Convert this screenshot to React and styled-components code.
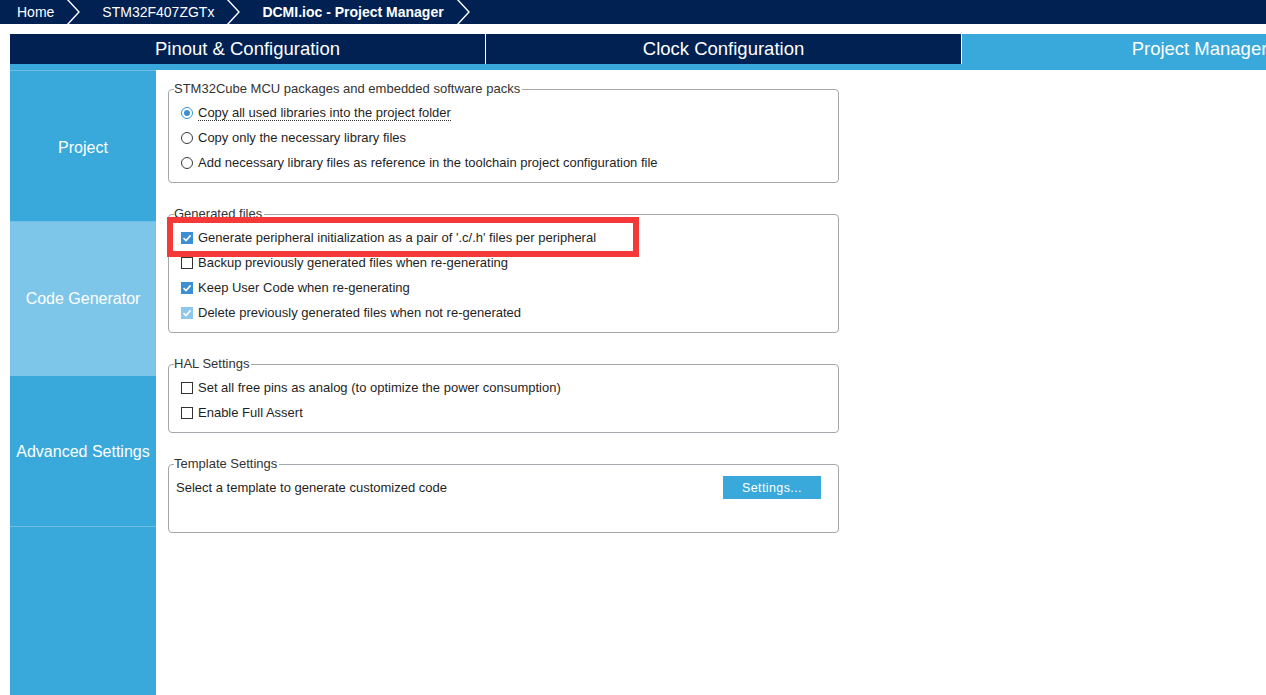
import React from 'react';
import styled, { createGlobalStyle } from 'styled-components';

const GlobalStyle = createGlobalStyle`
  html, body {
    margin: 0;
    padding: 0;
    background: #ffffff;
    overflow: hidden;
  }
  body {
    font-family: "Liberation Sans", Arial, sans-serif;
  }
`;

const NAVY = '#012152';
const BLUE = '#39a9dc';

const Page = styled.div`
  display: flex;
  flex-direction: column;
  height: 100vh;
  width: 100vw;
  overflow: hidden;
`;

const Breadcrumb = styled.div`
  display: flex;
  align-items: center;
  height: 24px;
  background: ${NAVY};
  color: #ffffff;
  font-size: 14px;
  padding-left: 17px;
  flex-shrink: 0;
`;

const Crumb = styled.span`
  font-weight: ${(p) => (p.$bold ? 700 : 400)};
  white-space: nowrap;
`;

const Chevron = styled.svg`
  width: 18px;
  height: 24px;
  margin: 0 20px 0 10px;
  flex-shrink: 0;
`;

const TabBar = styled.div`
  display: flex;
  margin-top: 10px;
  margin-left: 10px;
  height: 30px;
  flex-shrink: 0;
`;

const Tab = styled.div`
  width: 475px;
  flex-shrink: 0;
  display: flex;
  align-items: center;
  justify-content: center;
  background: ${(p) => (p.$active ? BLUE : NAVY)};
  border-right: 1px solid #ffffff;
  color: #ffffff;
  font-size: 18.5px;
  white-space: nowrap;
`;

const TabStrip = styled.div`
  height: 6px;
  margin-left: 10px;
  background: ${BLUE};
  flex-shrink: 0;
`;

const Body = styled.div`
  display: flex;
  flex: 1;
  margin-left: 10px;
  min-height: 0;
`;

const Sidebar = styled.div`
  width: 146px;
  background: ${BLUE};
  display: flex;
  flex-direction: column;
  flex-shrink: 0;
`;

const NavItem = styled.div`
  height: ${(p) => p.$h}px;
  display: flex;
  align-items: center;
  justify-content: center;
  color: #ffffff;
  font-size: 16px;
  padding-top: ${(p) => p.$shift || 0}px;
  background: ${(p) => (p.$active ? '#7dc6e9' : BLUE)};
  border-top: ${(p) => (p.$line ? '1px solid #72bfe6' : 'none')};
  border-bottom: ${(p) => (p.$lineBottom ? '1px solid #72bfe6' : 'none')};
  box-sizing: border-box;
`;

const Content = styled.div`
  display: flex;
  flex-direction: column;
  gap: 24px;
  padding: 12px 0 0 12px;
  width: 671px;
`;

const Group = styled.div`
  position: relative;
`;

const Box = styled.fieldset`
  margin: 0;
  border: 1px solid #a3a7ab;
  border-radius: 4px;
  padding: 4px 12px 7px 12px;
  min-height: ${(p) => p.$minH || 0}px;
  box-sizing: border-box;
  display: flex;
  flex-direction: column;
`;

const Legend = styled.legend`
  font-size: 13px;
  line-height: 14px;
  color: #333333;
  padding: 0 2px 0 0;
  margin-left: -7px;
`;

const Row = styled.div`
  display: flex;
  align-items: center;
  height: 25px;
  font-size: 13px;
  color: #1f1f1f;
  gap: 5px;
`;

const Label = styled.span`
  white-space: nowrap;
  border-bottom: ${(p) => (p.$focus ? '1px dotted #333333' : '1px solid transparent')};
  line-height: 15px;
`;

const RadioDot = styled.span`
  width: 12px;
  height: 12px;
  border-radius: 50%;
  box-sizing: border-box;
  border: 1px solid ${(p) => (p.$on ? '#3b8fd4' : '#3a3a3a')};
  display: flex;
  align-items: center;
  justify-content: center;
  flex-shrink: 0;
  &::after {
    content: '';
    width: 6px;
    height: 6px;
    border-radius: 50%;
    background: ${(p) => (p.$on ? '#3b8fd4' : 'transparent')};
  }
`;

const Check = styled.span`
  width: 12px;
  height: 12px;
  box-sizing: border-box;
  flex-shrink: 0;
  display: flex;
  align-items: center;
  justify-content: center;
  background: ${(p) => (p.$dim ? '#8ec6ee' : p.$on ? '#3b8fd4' : '#ffffff')};
  border: 1px solid ${(p) => (p.$dim ? '#8ec6ee' : p.$on ? '#3b8fd4' : '#333333')};
`;

const TemplateRow = styled.div`
  display: flex;
  align-items: center;
  justify-content: space-between;
  height: 25px;
  margin-left: -5px;
  padding-right: 5px;
  font-size: 13px;
  color: #1f1f1f;
`;

const SettingsButton = styled.div`
  width: 98px;
  height: 23px;
  background: ${BLUE};
  color: #ffffff;
  font-size: 12.5px;
  letter-spacing: 0.4px;
  display: flex;
  align-items: center;
  justify-content: center;
`;

const Highlight = styled.div`
  position: absolute;
  left: -1px;
  top: 10px;
  width: 472px;
  height: 40px;
  border: 6px solid #f53838;
  box-sizing: border-box;
  pointer-events: none;
`;

function ChevronIcon() {
  return (
    <Chevron viewBox="0 0 18 24">
      <polyline points="3,-1 15,12 3,25" fill="none" stroke="#ffffff" strokeWidth="1.4" />
    </Chevron>
  );
}

function Radio({ on, children, focus }) {
  return (
    <Row>
      <RadioDot $on={on} />
      <Label $focus={focus}>{children}</Label>
    </Row>
  );
}

function CheckRow({ on, dim, children }) {
  return (
    <Row>
      <Check $on={on} $dim={dim}>
        {(on || dim) && (
          <svg width="10" height="10" viewBox="0 0 10 10">
            <polyline points="1.5,5.2 4,7.6 8.6,2.4" fill="none" stroke="#ffffff" strokeWidth="1.6" />
          </svg>
        )}
      </Check>
      <Label>{children}</Label>
    </Row>
  );
}

export default function App() {
  return (
    <Page>
      <GlobalStyle />
      <Breadcrumb>
        <Crumb>Home</Crumb>
        <ChevronIcon />
        <Crumb>STM32F407ZGTx</Crumb>
        <ChevronIcon />
        <Crumb $bold>DCMI.ioc - Project Manager</Crumb>
        <ChevronIcon />
      </Breadcrumb>

      <TabBar>
        <Tab>Pinout &amp; Configuration</Tab>
        <Tab>Clock Configuration</Tab>
        <Tab $active>Project Manager</Tab>
      </TabBar>
      <TabStrip />

      <Body>
        <Sidebar>
          <NavItem $h={151} $line $shift={3}>Project</NavItem>
          <NavItem $h={155} $line $active>Code Generator</NavItem>
          <NavItem $h={151} $lineBottom $shift={1}>Advanced Settings</NavItem>
        </Sidebar>

        <Content>
          <Group>
            <Box>
              <Legend>STM32Cube MCU packages and embedded software packs</Legend>
              <Radio on focus>Copy all used libraries into the project folder</Radio>
              <Radio>Copy only the necessary library files</Radio>
              <Radio>Add necessary library files as reference in the toolchain project configuration file</Radio>
            </Box>
          </Group>

          <Group>
            <Box>
              <Legend>Generated files</Legend>
              <CheckRow on>Generate peripheral initialization as a pair of '.c/.h' files per peripheral</CheckRow>
              <CheckRow>Backup previously generated files when re-generating</CheckRow>
              <CheckRow on>Keep User Code when re-generating</CheckRow>
              <CheckRow dim>Delete previously generated files when not re-generated</CheckRow>
            </Box>
            <Highlight />
          </Group>

          <Group>
            <Box>
              <Legend>HAL Settings</Legend>
              <CheckRow>Set all free pins as analog (to optimize the power consumption)</CheckRow>
              <CheckRow>Enable Full Assert</CheckRow>
            </Box>
          </Group>

          <Group>
            <Box $minH={76}>
              <Legend>Template Settings</Legend>
              <TemplateRow>
                <span>Select a template to generate customized code</span>
                <SettingsButton>Settings...</SettingsButton>
              </TemplateRow>
            </Box>
          </Group>
        </Content>
      </Body>
    </Page>
  );
}
